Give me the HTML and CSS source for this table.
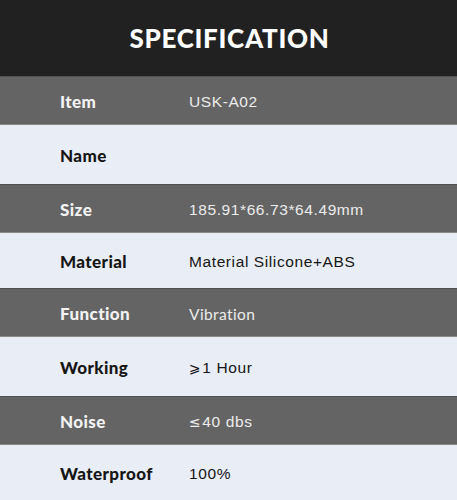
FILE: index.html
```html
<!DOCTYPE html>
<html lang="en">
<head>
<meta charset="utf-8">
<title>Specification</title>
<link rel="stylesheet" href="styles.css">
</head>
<body>
<div class="spec">
  <header class="spec__header"><h1 class="spec__title">SPECIFICATION</h1></header>
  <div class="row row--dark"><span class="row__label">Item</span><span class="row__value">USK-A02</span></div>
  <div class="row row--light row--tall"><span class="row__label">Name</span><span class="row__value"></span></div>
  <div class="row row--dark"><span class="row__label">Size</span><span class="row__value">185.91*66.73*64.49mm</span></div>
  <div class="row row--light"><span class="row__label">Material</span><span class="row__value">Material Silicone+ABS</span></div>
  <div class="row row--dark"><span class="row__label">Function</span><span class="row__value row__value--geo">Vibration</span></div>
  <div class="row row--light row--tall"><span class="row__label">Working</span><span class="row__value"><span class="sym">⩾</span>1 Hour</span></div>
  <div class="row row--dark"><span class="row__label">Noise</span><span class="row__value"><span class="sym">≤</span>40 dbs</span></div>
  <div class="row row--light"><span class="row__label">Waterproof</span><span class="row__value">100%</span></div>
</div>
</body>
</html>
```
FILE: styles.css
```css
* { box-sizing: border-box; }
html, body { margin: 0; padding: 0; }
body { width: 457px; height: 500px; overflow: hidden; background: #e9edf5; }
.spec { display: flex; flex-direction: column; }
.spec__header {
  height: 76px;
  background: #212121;
  display: flex;
  align-items: center;
  justify-content: center;
}
.spec__title {
  margin: 0;
  color: #fff;
  font-family: "Lato", sans-serif;
  font-weight: 900;
  font-size: 26px;
  letter-spacing: 0.7px;
  padding-left: 2px;
}
.row {
  display: flex;
  align-items: center;
  height: 55px;
  padding-left: 60px;
  padding-top: 2px;
}
.row--dark {
  height: 49px;
  background: #646464;
  border-top: 1px solid #505050;
  border-bottom: 1px solid #8a8a8a;
  color: #f2f2f2;
}
.row--light { background: #e9edf5; color: #161616; }
.row--tall { height: 59px; }
.row__label {
  width: 129px;
  font-family: "Lato", sans-serif;
  font-weight: 900;
  font-size: 17px;
  letter-spacing: 0.4px;
}
.row__value {
  font-family: "Liberation Sans", Arial, sans-serif;
  font-size: 15.5px;
  letter-spacing: 0.6px;
}
.row--dark .row__value { color: #ececec; }
.row__value--geo { font-family: "Lato", sans-serif; letter-spacing: 0.4px; }
.sym { font-family: "DejaVu Sans", sans-serif; font-size: 14px; margin-right: 1px; }
```
